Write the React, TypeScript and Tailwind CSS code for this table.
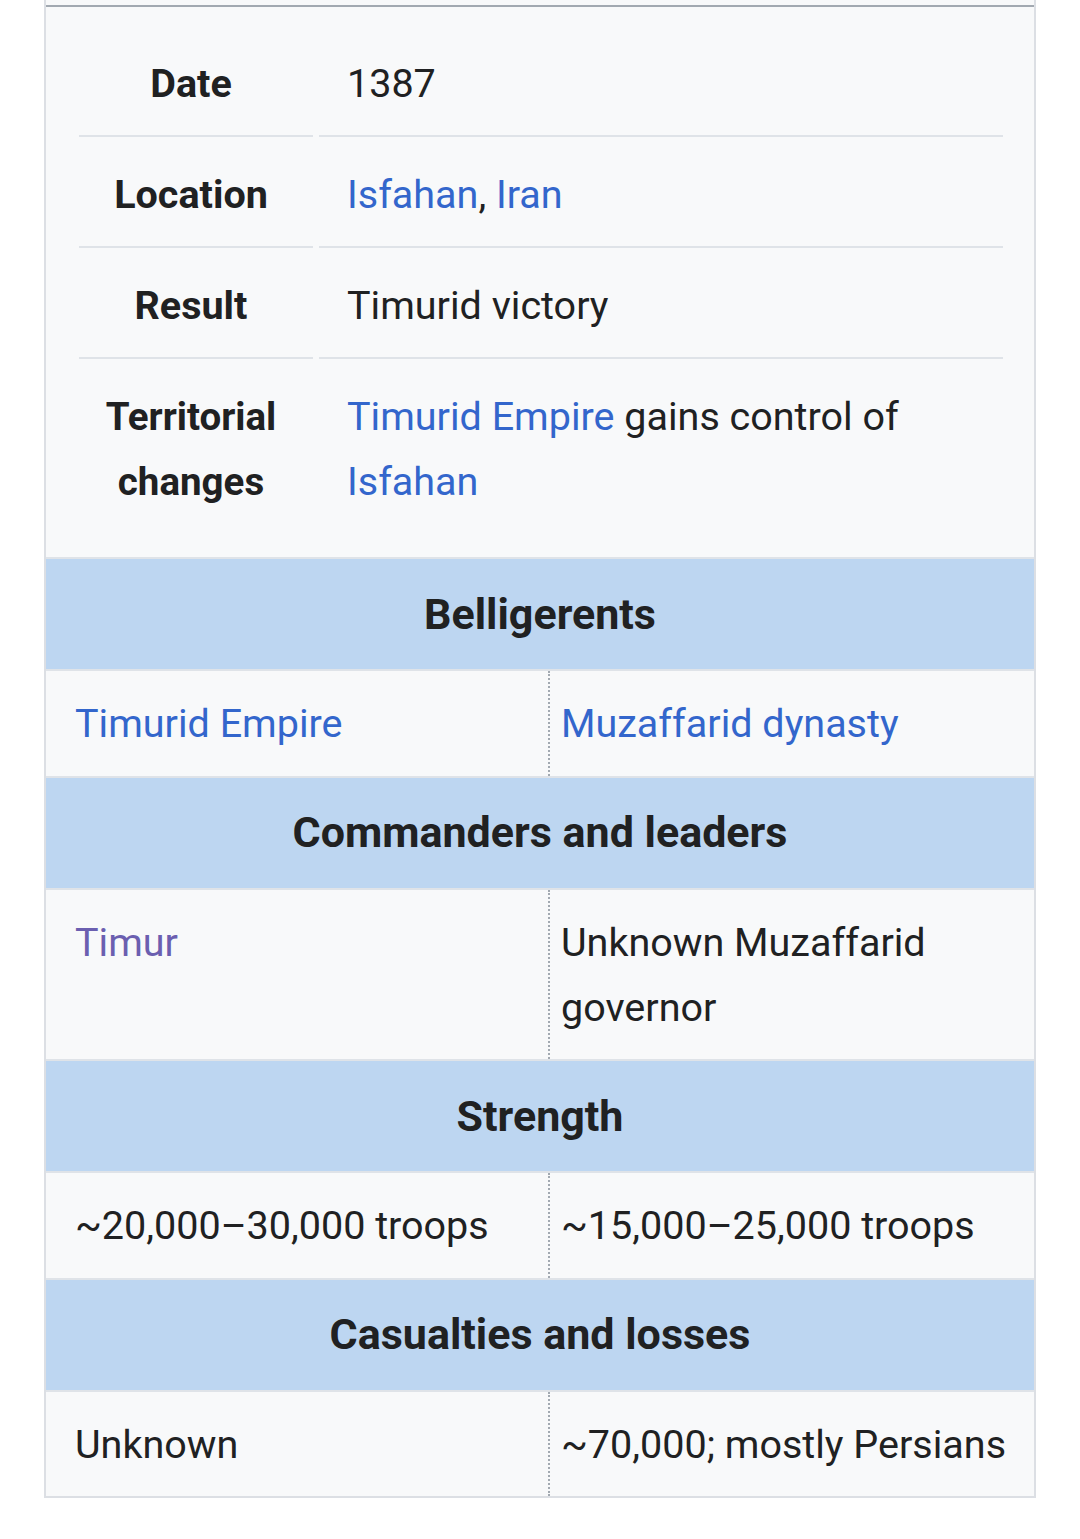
import type { ReactNode } from "react";

const LINK = "text-[#3366cc]";

function Label({ children, last }: { children: ReactNode; last?: boolean }) {
  return (
    <div
      className={`pb-[19px] pr-[10px] pt-[25px] text-center font-bold leading-[65px] ${
        last ? "" : "border-b-2 border-[#dfe3e8]"
      }`}
    >
      {children}
    </div>
  );
}

function Value({ children, last }: { children: ReactNode; last?: boolean }) {
  return (
    <div
      className={`pb-[19px] pl-[28px] pr-[40px] pt-[25px] leading-[65px] ${
        last ? "" : "border-b-2 border-[#dfe3e8]"
      }`}
    >
      {children}
    </div>
  );
}

function Header({ children }: { children: ReactNode }) {
  return (
    <div className="flex h-[112px] items-center justify-center border-t-2 border-[#dfe3e8] bg-[#bdd6f1] text-[43px] font-bold">
      {children}
    </div>
  );
}

function Pair({ left, right }: { left: ReactNode; right: ReactNode }) {
  return (
    <div className="grid grid-cols-[502px_1fr] border-t-2 border-[#dfe3e8] leading-[65px]">
      <div className="pb-[19.5px] pl-[29px] pr-[12px] pt-[20px]">{left}</div>
      <div className="border-l-2 border-dotted border-[#a2a9b1] pb-[19.5px] pl-[11px] pr-[8px] pt-[20px]">
        {right}
      </div>
    </div>
  );
}

export default function App() {
  return (
    <div
      className="min-h-screen bg-white pl-[44px] text-[39.5px] text-[#202122]"
      style={{ fontFamily: "Roboto, 'Noto Sans', sans-serif" }}
    >
      <div className="w-[992px] border-x-2 border-b-2 border-[#dcdfe4] bg-[#f8f9fa] pt-[5px]">
        <div className="h-[2px] bg-[#a2a9b1]" />
        <div className="grid grid-cols-[234px_684px] gap-x-[6px] px-[33px] pb-[24px] pt-[19px]">
          <Label>Date</Label>
          <Value>1387</Value>
          <Label>Location</Label>
          <Value>
            <span className={LINK}>Isfahan</span>, <span className={LINK}>Iran</span>
          </Value>
          <Label>Result</Label>
          <Value>Timurid victory</Value>
          <Label last>
            <span className="text-[38.5px]">
              Territorial
              <br />
              changes
            </span>
          </Label>
          <Value last>
            <span className={LINK}>Timurid Empire</span> gains control of{" "}
            <span className={LINK}>Isfahan</span>
          </Value>
        </div>

        <Header>Belligerents</Header>
        <Pair
          left={<span className={LINK}>Timurid Empire</span>}
          right={<span className={LINK}>Muzaffarid dynasty</span>}
        />
        <Header>Commanders and leaders</Header>
        <Pair
          left={<span className="text-[#6b5fb0]">Timur</span>}
          right={
            <>
              Unknown Muzaffarid
              <br />
              governor
            </>
          }
        />
        <Header>Strength</Header>
        <Pair left="~20,000–30,000 troops" right="~15,000–25,000 troops" />
        <Header>Casualties and losses</Header>
        <Pair left="Unknown" right="~70,000; mostly Persians" />
      </div>
    </div>
  );
}
